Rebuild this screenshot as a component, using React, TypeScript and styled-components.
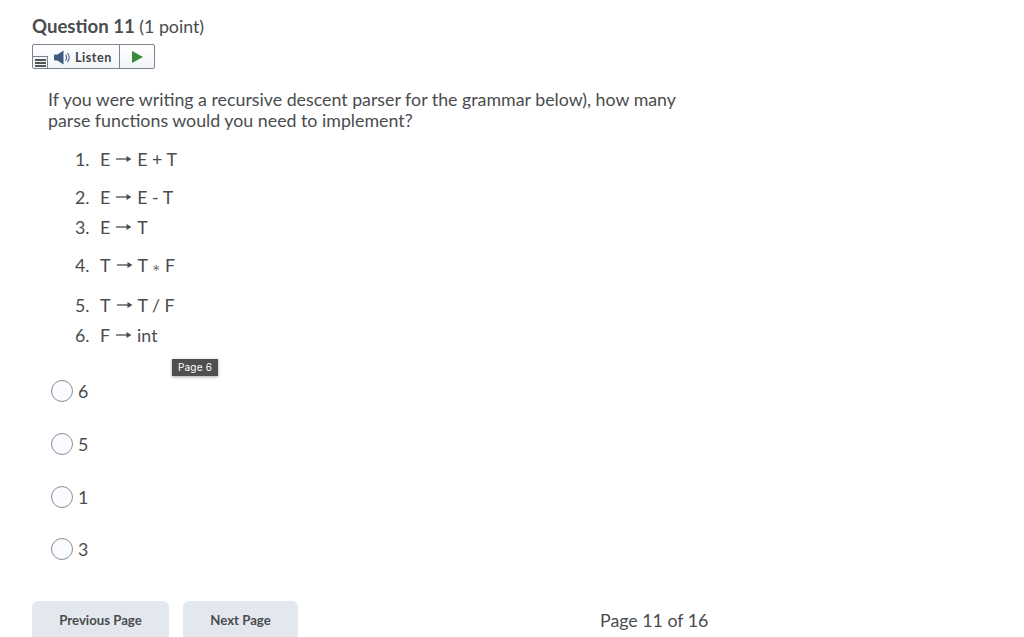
import styled, { createGlobalStyle } from 'styled-components'

const GlobalStyle = createGlobalStyle`
    html, body {
        margin: 0;
        height: 100%;
        overflow: hidden;
        background: #fff;
    }
`

const Page = styled.div`
    position: relative;
    width: 1024px;
    height: 637px;
    overflow: hidden;
    box-sizing: border-box;
    padding: 14px 0 0 32px;
    font-family: Lato, "Open Sans", sans-serif;
    color: #494c4e;
`

const Title = styled.h2`
    margin: 0;
    font-size: 17.8px;
    line-height: 24px;
    font-weight: 400;
    color: #494c4e;

    strong {
        font-size: 18.6px;
        font-weight: 700;
    }
`

const ListenBar = styled.div`
    display: flex;
    width: 123px;
    height: 25px;
    margin-top: 6px;
    box-sizing: border-box;
    border: 1px solid #7b8490;
    border-radius: 2px;
    background: linear-gradient(#ffffff, #f3f5f9);
`

const ListenButton = styled.div`
    position: relative;
    display: flex;
    align-items: center;
    width: 87px;
    box-sizing: border-box;
    padding: 1px 0 0 21px;
    gap: 4px;
    border-right: 1px solid #7b8490;
    font-size: 12.6px;
    font-weight: 700;
    letter-spacing: 0.5px;
    color: #3f4244;
`

const MenuBadge = styled.div`
    position: absolute;
    left: 0;
    bottom: 0;
    display: flex;
    align-items: center;
    justify-content: center;
    width: 15px;
    height: 12px;
    box-sizing: border-box;
    border: 1px solid #7b8490;
    border-left: none;
    border-bottom: none;
    background: #f4f5f8;
`

const PlayButton = styled.div`
    display: flex;
    flex: 1;
    align-items: center;
    justify-content: center;
`

const Content = styled.div`
    padding-left: 16px;
    margin-top: 20.4px;
    width: 660px;
`

const Prompt = styled.p`
    margin: 0;
    font-size: 17.8px;
    line-height: 21px;
    color: #494c4e;
`

const Grammar = styled.ol`
    list-style: none;
    margin: 12.6px 0 0;
    padding: 0 0 0 27px;
`

const Rule = styled.li<{ $space?: number }>`
    display: flex;
    height: 30px;
    align-items: center;
    margin-top: ${p => p.$space ?? 0}px;
    font-size: 17.8px;
    color: #494c4e;
`

const RuleNumber = styled.span`
    width: 25px;
`

const Arrow = styled.svg`
    width: 16px;
    height: 10px;
    margin: 0 5px 0 6px;
`

const Star = styled.span`
    font-size: 10px;
    margin: 4px 5px 0 4px;
    color: #6e7376;
`

const PageTag = styled.div`
    position: absolute;
    left: 172px;
    top: 359px;
    width: 46px;
    height: 17px;
    padding-bottom: 1px;
    box-sizing: border-box;
    display: flex;
    align-items: center;
    justify-content: center;
    background: #4f4f4f;
    color: #fff;
    font-size: 10px;
    letter-spacing: 0.2px;
    font-family: Inter, "Liberation Sans", sans-serif;
    box-shadow: 0 1px 3px rgba(0, 0, 0, 0.35);
`

const Options = styled.div`
    display: flex;
    flex-direction: column;
    margin-top: 30px;
    padding-left: 19px;
    gap: 30px;
`

const Option = styled.label`
    display: flex;
    align-items: center;
    height: 22.67px;
    gap: 5px;
    font-size: 17.8px;
    color: #494c4e;
`

const Radio = styled.span`
    width: 22px;
    height: 22px;
    box-sizing: border-box;
    border: 1px solid #8a8f94;
    border-radius: 50%;
    background: #f9fbff;
`

const Footer = styled.div`
    display: flex;
    align-items: flex-start;
    margin-top: 40px;
`

const NavButton = styled.button<{ $width: number }>`
    width: ${p => p.$width}px;
    height: 40px;
    margin-right: 14px;
    border: none;
    border-radius: 6px;
    background: #e3e8ef;
    color: #494c4e;
    font-family: Lato, sans-serif;
    font-size: 13.2px;
    font-weight: 700;
    padding: 0 0 1px;
`

const PageCount = styled.div`
    margin-left: 288px;
    font-size: 17.8px;
    line-height: 38px;
    color: #494c4e;
`

const RuleArrow = () => (
    <Arrow viewBox="0 0 16 10">
        <path d="M0 5h13" stroke="#494c4e" strokeWidth="1.3" />
        <path d="M10.500 2l5 3-5 3z" fill="#494c4e" />
    </Arrow>
)

const rules = [
    { left: 'E', right: 'E + T', space: 0 },
    { left: 'E', right: 'E - T', space: 8 },
    { left: 'E', right: 'T', space: 0 },
    { left: 'T', right: 'T', star: 'F', space: 8 },
    { left: 'T', right: 'T / F', space: 10 },
    { left: 'F', right: 'int', space: 0 },
]

export default function App() {
    return (
        <Page>
            <GlobalStyle />
            <Title>
                <strong>Question 11</strong> (1 point)
            </Title>
            <ListenBar>
                <ListenButton>
                    <MenuBadge>
                        <svg width="11" height="8" viewBox="0 0 11 8">
                            <path d="M0 1h11M0 4h11M0 7h11" stroke="#222" strokeWidth="1.6" />
                        </svg>
                    </MenuBadge>
                    <svg width="17" height="15" viewBox="0 0 17 15">
                        <path d="M0 5.500C0 5 .5 4.500 1 4.500h2.500L9.500 .5v14l-6-4H1c-.5 0-1-.5-1-1z" fill="#3d5a80" />
                        <path d="M11.500 4.500c1.400 1.800 1.400 4.200 0 6M13.500 3c2.200 2.600 2.200 6.400 0 9" stroke="#3d5a80" strokeWidth="1.100" fill="none" />
                    </svg>
                    Listen
                </ListenButton>
                <PlayButton>
                    <svg width="11" height="12" viewBox="0 0 11 12">
                        <path d="M0 0l11 6-11 6z" fill="#3c8a3c" />
                    </svg>
                </PlayButton>
            </ListenBar>
            <Content>
                <Prompt>
                    If you were writing a recursive descent parser for the grammar below), how many
                    <br />
                    parse functions would you need to implement?
                </Prompt>
                <Grammar>
                    {rules.map((rule, i) => (
                        <Rule key={i} $space={rule.space}>
                            <RuleNumber>{i + 1}.</RuleNumber>
                            {rule.left}
                            <RuleArrow />
                            {rule.right}
                            {rule.star && <Star>∗</Star>}
                            {rule.star}
                        </Rule>
                    ))}
                </Grammar>
            </Content>
            <PageTag>Page 6</PageTag>
            <Options>
                {['6', '5', '1', '3'].map(value => (
                    <Option key={value}>
                        <Radio />
                        {value}
                    </Option>
                ))}
            </Options>
            <Footer>
                <NavButton $width={137}>Previous Page</NavButton>
                <NavButton $width={115}>Next Page</NavButton>
                <PageCount>Page 11 of 16</PageCount>
            </Footer>
        </Page>
    )
}
